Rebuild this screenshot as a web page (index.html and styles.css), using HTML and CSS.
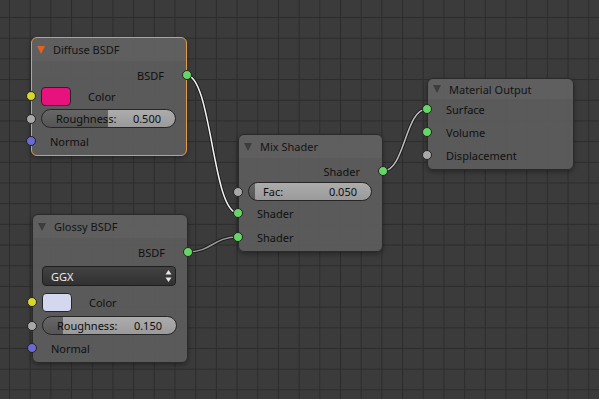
FILE: index.html
```html
<!DOCTYPE html>
<html lang="en">
<head>
<meta charset="UTF-8" />
<meta name="viewport" content="width=device-width, initial-scale=1.0" />
<title>Node Editor – Material</title>
<link rel="stylesheet" href="styles.css">
</head>
<body>
  <main class="canvas">
    <!-- noodles sit under the nodes -->
    <svg class="links" width="599" height="399" viewBox="0 0 599 399">
      <path class="edge" d="M186 75 C212 75 212 213 238 213" />
      <path class="core hot" d="M186 75 C212 75 212 213 238 213" />
      <path class="edge" d="M187 252 C212.5 252 212.5 237 238 237" />
      <path class="core dim" d="M187 252 C212.5 252 212.5 237 238 237" />
      <path class="edge" d="M383 171 C405 171 405 109 427 109" />
      <path class="core" d="M383 171 C405 171 405 109 427 109" />
    </svg>

    <!-- Diffuse BSDF (active) -->
    <div class="node diffuse selected">
      <div class="head"><span class="tri"></span><span class="title">Diffuse BSDF</span></div>
      <div class="row out">BSDF<i class="sock shader"></i></div>
      <div class="row color"><i class="sock col"></i><span class="swatch pink"></span><span class="lbl">Color</span></div>
      <div class="row slide"><i class="sock flt"></i>
        <div class="slider" style="--v:50%"><span>Roughness:</span><span>0.500</span></div>
      </div>
      <div class="row in normal"><i class="sock vec"></i>Normal</div>
    </div>

    <!-- Glossy BSDF -->
    <div class="node glossy">
      <div class="head"><span class="tri"></span><span class="title">Glossy BSDF</span></div>
      <div class="row out">BSDF<i class="sock shader"></i></div>
      <div class="row pick">
        <div class="drop">GGX
          <svg width="7" height="14" viewBox="0 0 7 14"><path d="M0.5 5.5 L3.5 1 L6.5 5.5Z M0.5 8.5 L3.5 13 L6.5 8.5Z" fill="#e6e6e6"/></svg>
        </div>
      </div>
      <div class="row color"><i class="sock col"></i><span class="swatch pale"></span><span class="lbl">Color</span></div>
      <div class="row slide"><i class="sock flt"></i>
        <div class="slider" style="--v:15%"><span>Roughness:</span><span>0.150</span></div>
      </div>
      <div class="row in normal"><i class="sock vec"></i>Normal</div>
    </div>

    <!-- Mix Shader -->
    <div class="node mix">
      <div class="head"><span class="tri"></span><span class="title">Mix Shader</span></div>
      <div class="row out">Shader<i class="sock shader"></i></div>
      <div class="row slide"><i class="sock flt"></i>
        <div class="slider" style="--v:5%"><span>Fac:</span><span>0.050</span></div>
      </div>
      <div class="row in first"><i class="sock shader"></i>Shader</div>
      <div class="row in second"><i class="sock shader"></i>Shader</div>
    </div>

    <!-- Material Output -->
    <div class="node output">
      <div class="head"><span class="tri"></span><span class="title">Material Output</span></div>
      <div class="row in"><i class="sock shader"></i>Surface</div>
      <div class="row in"><i class="sock shader"></i>Volume</div>
      <div class="row in"><i class="sock flt"></i>Displacement</div>
    </div>
  </main>
</body>
</html>
```

FILE: styles.css
```css
* { box-sizing: border-box; margin: 0; padding: 0; }
body { width: 599px; height: 399px; overflow: hidden; background: #3a3a3a; font-family: 'Noto Sans', 'Open Sans', sans-serif; font-size: 11px; color: #101010; }

/* === grid canvas === */
.canvas {
  position: relative;
  width: 599px;
  height: 399px;
  background-color: #3b3b3b;
  background-image:
    linear-gradient(to right, #2c2c2c 1px, transparent 1px),
    linear-gradient(to bottom, #2c2c2c 1px, transparent 1px);
  background-size: 20.7px 20.7px;
  background-position: 9px 17px;
}

/* === links === */
.links { position: absolute; inset: 0; }
.links path { fill: none; }
.links .edge { stroke: #1c1c1c; stroke-width: 3.4; }
.links .core { stroke: #bdbdbd; stroke-width: 1.5; }
.links .core.hot { stroke: #f2f2f2; }
.links .core.dim { stroke: #9a9a9a; }

/* === nodes === */
.node {
  position: absolute;
  display: flex;
  flex-direction: column;
  padding-bottom: 4px;
  background: rgba(93,93,93,0.93);
  border: 1px solid #2a2a2a;
  border-radius: 6px;
  box-shadow: 0 2px 5px rgba(0,0,0,0.35);
}
.node.selected { border-color: #e29a48; }
.diffuse { left: 31px; top: 37px; width: 156px; }
.glossy { left: 32px; top: 214px; width: 156px; }
.mix { left: 238px; top: 134px; width: 145px; }
.output { left: 427px; top: 78px; width: 147px; }

.head {
  height: 23px;
  display: flex;
  align-items: center;
  padding-left: 5px;
  background: rgba(255,255,255,0.035);
  border-radius: 5px 5px 0 0;
  color: #141414;
}
.output .head { height: 20px; }
.tri { width: 0; height: 0; border-left: 4.5px solid transparent; border-right: 4.5px solid transparent; border-top: 8px solid #3d3d3d; }
.selected .tri { border-top-color: #e2621c; }
.title { margin-left: 8px; }

/* rows */
.row { position: relative; height: 20px; display: flex; align-items: center; }
.row.out { justify-content: flex-end; padding-right: 22px; }
.row.in { padding-left: 18px; }
.diffuse .out, .glossy .out { margin-top: 4px; }
.mix .out { margin-top: 3px; }
.diffuse .color { margin-top: 1px; }
.glossy .color { margin-top: 6px; }
.pick { margin-top: 4px; }
.diffuse .slide { margin-top: 3px; }
.glossy .slide { margin-top: 4px; }
.mix .slide { margin-top: 1px; }
.row.slide { height: 19px; }
.diffuse .normal { margin-top: 3px; }
.glossy .normal { margin-top: 3px; }
.mix .first { margin-top: 2px; }
.mix .second { margin-top: 4px; }
.output .in + .in { margin-top: 3px; }

/* sockets */
.sock { position: absolute; top: 50%; left: -6px; width: 10px; height: 10px; margin-top: -5px; border-radius: 50%; border: 1px solid #222; }
.out .sock { left: auto; right: -6px; }
.sock.shader { background: #67d467; }
.sock.col { background: #d6d62c; }
.sock.flt { background: #a8a8a8; }
.sock.vec { background: #6a6ad0; }

/* widgets */
.swatch { width: 30px; height: 19px; margin-left: 9px; border: 1px solid #262626; border-radius: 4px; }
.swatch.pink { background: #e8127f; }
.swatch.pale { background: #d4d8ee; }
.lbl { margin-left: 17px; }

.slider {
  flex: 1;
  height: 19px;
  margin: 0 10px 0 9px;
  padding: 0 14px;
  display: flex;
  align-items: center;
  justify-content: space-between;
  border: 1px solid #262626;
  border-radius: 10px;
  color: #0e0e0e;
  background:
    linear-gradient(rgba(255,255,255,0.07), rgba(0,0,0,0.07)),
    linear-gradient(to right, #5b5b5b var(--v), #a6a6a6 var(--v));
}

.drop {
  flex: 1;
  height: 20px;
  margin: 0 11px 0 9px;
  padding: 0 3px 0 8px;
  display: flex;
  align-items: center;
  justify-content: space-between;
  border: 1px solid #1e1e1e;
  border-radius: 4px;
  color: #ececec;
  background: linear-gradient(#424242, #313131);
}
```
